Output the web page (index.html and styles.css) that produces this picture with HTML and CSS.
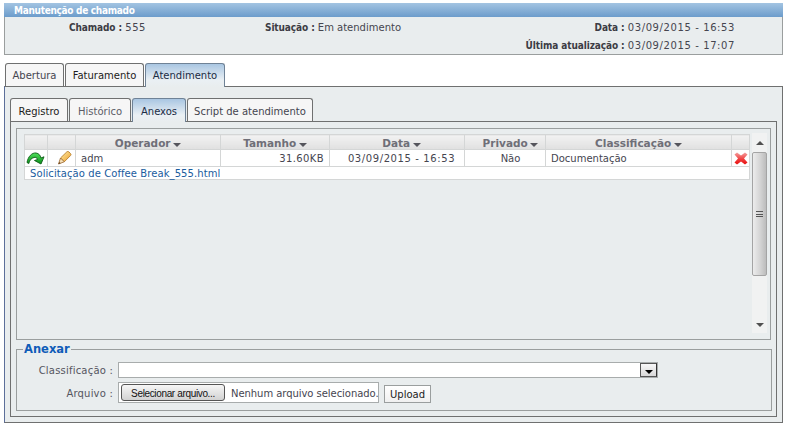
FILE: index.html
```html
<!DOCTYPE html>
<html lang="pt-BR">
<head>
<meta charset="utf-8">
<title>Manutenção de chamado</title>
<link rel="stylesheet" href="styles.css">
</head>
<body>
<section class="summary">
  <h1 class="summary-title">Manutenção de chamado</h1>
  <div class="summary-body">
    <div class="f f-a"><b>Chamado :</b> <span class="num">555</span></div>
    <div class="f f-b"><b>Situação :</b> Em atendimento</div>
    <div class="f f-c"><b>Data :</b> <span class="num">03/09/2015 - 16:53</span></div>
    <div class="f f-d"><b>Última atualização :</b> <span class="num">03/09/2015 - 17:07</span></div>
  </div>
</section>

<nav class="tabs outer-tabs">
  <span class="tab w59">Abertura</span>
  <span class="tab w79 dark">Faturamento</span>
  <span class="tab w80 active">Atendimento</span>
</nav>
<div class="outer-panel">
  <nav class="tabs inner-tabs">
    <span class="tab w58 dark">Registro</span>
    <span class="tab w62 muted">Histórico</span>
    <span class="tab w54 active">Anexos</span>
    <span class="tab w126">Script de atendimento</span>
  </nav>
  <div class="inner-panel">
    <div class="list-box">
      <div class="table-wrap">
        <table class="grid">
          <colgroup>
            <col class="c1"><col class="c2"><col class="c3"><col class="c4"><col class="c5"><col class="c6"><col class="c7"><col class="c8">
          </colgroup>
          <thead>
            <tr>
              <th></th><th></th>
              <th>Operador <i class="caret"></i></th>
              <th>Tamanho <i class="caret"></i></th>
              <th class="off-date">Data <i class="caret"></i></th>
              <th class="off-priv">Privado <i class="caret"></i></th>
              <th>Classificação <i class="caret"></i></th>
              <th></th>
            </tr>
          </thead>
          <tbody>
            <tr>
              <td class="icon">
                <svg width="20" height="14" viewBox="0 0 20 14">
                  <defs><linearGradient id="ga" x1="0" y1="0" x2="0" y2="1"><stop offset="0" stop-color="#4fe05a"/><stop offset="1" stop-color="#0b8f1c"/></linearGradient></defs>
                  <path d="M1 11.500C2 5.500 6 1.500 10 2c2.800.4 4.500 2.500 5 5l3-1.200-3 7.200-6.500-3.500 3-1C11 6.500 9.500 6 8 6.500 5.500 7.200 3.500 9 2.800 12.500z" fill="url(#ga)" stroke="#0a5a14" stroke-width=".9" stroke-linejoin="round"/>
                </svg>
              </td>
              <td class="icon pencil">
                <svg width="15" height="14" viewBox="0 0 14 14">
                  <defs><linearGradient id="gp" x1="0" y1="0" x2="1" y2="1"><stop offset="0" stop-color="#fff0a8"/><stop offset="1" stop-color="#eb9a2a"/></linearGradient></defs>
                  <path d="M3 7L9.300 .9a1.500 1.500 0 0 1 2.100 0l1.600 1.600a1.500 1.500 0 0 1 0 2.100L6.800 10.800z" fill="url(#gp)" stroke="#b9802c" stroke-width=".9"/>
                  <path d="M3 7L1 13l5.800-2.200z" fill="#f5e0b8" stroke="#9a6428" stroke-width=".8" stroke-linejoin="round"/>
                  <path d="M1.700 11l-.7 2 2.100-.8z" fill="#5a3a1c"/>
                </svg>
              </td>
              <td class="left">adm</td>
              <td class="right num">31.60KB</td>
              <td class="num off-date">03/09/2015 - 16:53</td>
              <td class="off-priv">Não</td>
              <td class="left">Documentação</td>
              <td class="icon">
                <svg width="14" height="13" viewBox="0 0 14 13">
                  <defs><linearGradient id="gx" x1="0" y1="0" x2="0" y2="1"><stop offset="0" stop-color="#f4a0a0"/><stop offset=".55" stop-color="#f04040"/><stop offset="1" stop-color="#e80c0c"/></linearGradient></defs>
                  <path d="M.5 2.500L3 .5l4 3L11 .5l2.500 2L10 6.500l3.500 4L11 12.500 7 9.500l-4 3-2.500-2L4 6.500z" fill="url(#gx)"/>
                </svg>
              </td>
            </tr>
            <tr>
              <td colspan="8" class="file"><a href="#">Solicitação de Coffee Break_555.html</a></td>
            </tr>
          </tbody>
        </table>
      </div>
      <div class="scrollbar">
        <span class="arrow up"></span>
        <div class="thumb"><span class="grip"></span></div>
        <div class="track"></div>
        <span class="arrow down"></span>
      </div>
    </div>
    <fieldset class="attach">
      <legend>Anexar</legend>
      <div class="row">
        <label class="lbl">Classificação :</label>
        <div class="select"><span class="select-btn"><i class="select-caret"></i></span></div>
      </div>
      <div class="row row-file">
        <label class="lbl">Arquivo :</label>
        <div class="file-input">
          <button type="button" class="file-btn">Selecionar arquivo...</button>
          <span class="file-name">Nenhum arquivo selecionado.</span>
        </div>
        <button type="button" class="upload">Upload</button>
      </div>
    </fieldset>
  </div>
</div>
</body>
</html>
```
FILE: styles.css
```css
* { box-sizing: border-box; }
html, body { margin: 0; padding: 0; }
body {
  width: 788px;
  height: 427px;
  padding: 3px 4px 0;
  background: #fff;
  font: 10px/12px "DejaVu Sans", Verdana, sans-serif;
  color: #45454f;
  overflow: hidden;
}
.num { letter-spacing: .6px; }
.summary { width: 779px; height: 52px; border: 1px solid #9a9e9e; border-top: 0; background: #e9edee; }
.summary-title {
  margin: 0 -1px;
  height: 14px;
  padding: 0 0 0 10px;
  font: bold 10px/15px "DejaVu Sans Condensed", "DejaVu Sans", sans-serif;
  font-stretch: condensed;
  letter-spacing: -.3px;
  color: #fff;
  background: linear-gradient(#a3c4e2, #6c9ccb);
}
.summary-body { position: relative; height: 37px; }
.f { position: absolute; white-space: nowrap; }
.f b {
  color: #3c3c44;
  font-family: "DejaVu Sans Condensed", "DejaVu Sans", sans-serif;
  font-stretch: condensed;
  letter-spacing: -.1px;
}
.f-a { left: 64px; top: 5px; }
.f-b { left: 260px; top: 5px; }
.f-c { right: 47px; top: 5px; }
.f-d { right: 47px; top: 23px; }

.tabs { display: flex; gap: 1px; align-items: flex-end; }
.outer-tabs { margin: 8px 0 0 1px; height: 23px; position: relative; z-index: 1; }
.inner-tabs { height: 23px; margin: 11px 0 0 0; position: relative; z-index: 1; }
.tab {
  height: 23px;
  border: 1px solid #6f7070;
  border-bottom: 0;
  border-radius: 3px 3px 0 0;
  background: #f6f6f6;
  font-size: 10px;
  line-height: 24px;
  text-align: center;
  color: #45454f;
  white-space: nowrap;
}
.inner-tabs .tab { line-height: 25px; }
.w54 { width: 54px; } .w58 { width: 58px; } .w59 { width: 59px; } .w62 { width: 62px; }
.w79 { width: 79px; } .w80 { width: 80px; } .w126 { width: 126px; }
.tab.dark { color: #1c1c20; }
.tab.muted { color: #5c5c66; }
.tab.active {
  height: 24px;
  color: #1c2c44;
  border-color: #6f8296;
  background: linear-gradient(#a9c6e2, #eaf0f4 70%, #e9edee);
  margin-bottom: -1px;
}

.outer-panel {
  width: 779px;
  height: 337px;
  padding: 0 5px;
  border: 1px solid #6f7070;
  border-left-color: #5c6f9a;
  background: #e9edee;
}
.inner-panel {
  width: 767px;
  height: 296px;
  padding: 6px 5px 5px;
  border: 1px solid #6f7070;
  background: #e9edee;
}
.list-box {
  display: flex;
  height: 212px;
  padding: 4px 3px 0 7px;
  border: 1px solid #9a9e9e;
}
.table-wrap { width: 725px; flex: none; padding-top: 1px; }
.grid { width: 725px; border-collapse: collapse; table-layout: fixed; background: #fff; }
.c1 { width: 23px; } .c2 { width: 28px; } .c3 { width: 145px; } .c4 { width: 109px; }
.c5 { width: 135px; } .c6 { width: 81px; } .c7 { width: 186px; } .c8 { width: 18px; }
.grid th {
  height: 15px;
  padding: 1px 0 0;
  border: 1px solid #d4d6d6;
  background: linear-gradient(#f2f2f2, #e0e0e0);
  font: bold 10.500px/12px "DejaVu Sans", Verdana, sans-serif;
  color: #6f6f78;
  text-align: center;
}
.grid td {
  height: 17px;
  padding: 2px 0 0;
  border: 1px solid #d4d6d6;
  text-align: center;
  white-space: nowrap;
}
.grid td.left { text-align: left; padding-left: 5px; }
.grid td.right { text-align: right; padding-right: 5px; letter-spacing: .4px; }
.grid td.icon { line-height: 0; padding: 0; }
.grid td.pencil { padding-left: 6px; }
.grid td.file { height: 13px; line-height: 11px; text-align: left; padding: 1px 0 0 5px; letter-spacing: .08px; }
.grid .off-date { padding-left: 9px; }
.grid .off-priv { padding-left: 11px; }
.grid a { color: #1a5c9e; text-decoration: none; }
.caret {
  display: inline-block;
  margin-left: -1px;
  border: 4px solid transparent;
  border-top: 4px solid #55555c;
  border-bottom: 0;
  vertical-align: 0;
}

.scrollbar {
  margin-left: 3px;
  width: 16px;
  height: 200px;
  display: flex;
  flex-direction: column;
  align-items: center;
  background: #f1f2f2;
}
.arrow { flex: none; width: 0; height: 0; border: 4px solid transparent; }
.arrow.up { margin: 8px 0; border-top: 0; border-bottom: 4px solid #505050; }
.arrow.down { margin: 0 0 6px; border-bottom: 0; border-top: 4px solid #505050; }
.thumb {
  width: 15px;
  height: 124px;
  flex: none;
  display: flex;
  align-items: center;
  justify-content: center;
  border: 1px solid #a4a4a4;
  border-radius: 2px;
  background: linear-gradient(90deg, #ececec, #d2d2d2 60%, #bcbcbc);
  margin-top: -1px;
}
.grip { width: 7px; height: 6px; border-top: 1px solid #555; border-bottom: 1px solid #555; background: linear-gradient(#555,#555) center/100% 1px no-repeat; }
.track { flex: 1; }

.attach {
  margin: 3px 0 0;
  height: 68px;
  padding: 0 0 0 6px;
  border: 1px solid #9a9e9e;
  min-width: 0;
  width: 756px;
}
.attach legend {
  margin-left: 0;
  padding: 0 1px;
  font: bold 11.500px/12px "DejaVu Sans", Verdana, sans-serif;
  color: #0f5cb8;
}
.row { display: flex; align-items: center; margin-top: 7px; height: 16px; }
.row-file { margin-top: 4px; height: 21px; }
.lbl { width: 90px; padding-top: 2px; text-align: right; color: #55555e; letter-spacing: .2px; }
.row-file .lbl { padding-top: 3px; }
.select {
  display: flex;
  justify-content: flex-end;
  margin-left: 5px;
  width: 540px;
  height: 16px;
  background: #fff;
  border: 1px solid #a8acac;
}
.select-btn {
  width: 17px;
  height: 14px;
  border: 1px solid #555;
  border-right-color: #333;
  background: linear-gradient(#f8f8f8, #d8d8d8);
  display: flex;
  align-items: center;
  justify-content: center;
}
.select-caret { margin-top: 3px; border: 4px solid transparent; border-top: 4px solid #000; border-bottom: 0; }
.file-input {
  display: flex;
  align-items: center;
  margin-left: 5px;
  width: 261px;
  height: 21px;
  padding: 0 0 0 2px;
  background: #fff;
  border: 1px solid #a8acac;
}
.file-btn {
  flex: none;
  width: 104px;
  height: 17px;
  padding: 2px 0 0;
  border: 1px solid #555;
  border-radius: 3px;
  background: linear-gradient(#f6f6f6, #d2d2d2);
  font: 10px/12px "Liberation Sans", Arial, sans-serif;
  letter-spacing: -.35px;
  color: #111;
}
.file-name { margin: 3px 0 0 6px; white-space: nowrap; letter-spacing: -.05px; color: #45454f; }
.upload {
  margin: 3px 0 0 5px;
  width: 47px;
  height: 18px;
  padding: 2px 0 0;
  border: 1px solid #9a9e9e;
  background: linear-gradient(#fff, #f0f0f0);
  font: 10px/12px "DejaVu Sans", Verdana, sans-serif;
  color: #222;
}
```
